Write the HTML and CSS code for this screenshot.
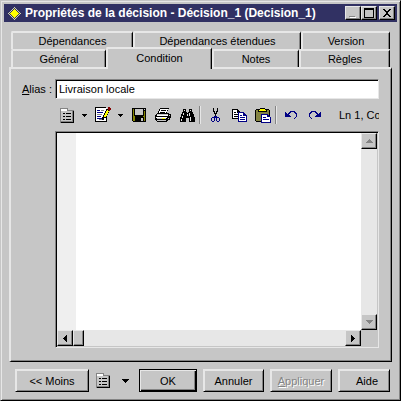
FILE: index.html
```html
<!DOCTYPE html>
<html lang="fr">
<head>
  <meta charset="UTF-8">
  <title>Propriétés de la décision</title>
  <link rel="stylesheet" href="styles.css">
</head>
<body>
  <svg width="0" height="0" class="defs" aria-hidden="true">
    <symbol id="icon-list" viewBox="0 0 14 15">
      <path d="M0 0h8v2h6v13H0z" fill="#848484"/>
      <path d="M1 1h6v2H1z" fill="#fff"/>
      <path d="M1 3h11v10H1z" fill="#c6c6c6"/>
      <path d="M13 3h1v12H1v-1h12z"/>
      <path d="M3 5h2v1H3zM3 8h2v1H3zM3 11h2v1H3zM6 5h5v1H6zM6 8h5v1H6zM6 11h5v1H6z"/>
    </symbol>
    <symbol id="icon-down" viewBox="0 0 7 4">
      <path d="M0 0h7v1H0zM1 1h5v1H1zM2 2h3v1H2zM3 3h1v1H3z"/>
    </symbol>
  </svg>

  <div class="window">
    <div class="titlebar">
      <svg class="logo" width="13" height="13" viewBox="0 0 13 13">
        <path d="M6 0h1v1h1v1h1v1h1v1h1v1h1v1h1v1h-1v1h-1v1h-1v1H9v1H8v1H7v1H6v-1H5v-1H4v-1H3V9H2V8H1V7H0V6h1V5h1V4h1V3h1V2h1V1h1z" fill="#d6d6b0"/>
        <path d="M6 1h1v1h1v1h1v1h1v1h1v1h1v1h-1v1h-1v1H9v1H8v1H7v1H6v-1H5v-1H4V9H3V8H2V7H1V6h1V5h1V4h1V3h1V2h1z" fill="#313163"/>
        <path d="M6 2h1v1h1v1h1v1h1v1h1v1h-1v1H9v1H8v1H7v1H6v-1H5V9H4V8H3V7H2V6h1V5h1V4h1V3h1z" fill="#ff0"/>
      </svg>
      <span class="title">Propriétés de la décision - Décision_1 (Decision_1)</span>
      <div class="controls">
        <button class="ctl" aria-label="Réduire">
          <svg width="10" height="10"><path d="M1 8h6v1H1z" fill="#848484"/><path d="M2 9h6v1H2z" fill="#fff"/></svg>
        </button>
        <button class="ctl" aria-label="Agrandir">
          <svg width="10" height="10"><path d="M0 0h10v10H0zM1 2v7h8V2z" fill-rule="evenodd"/></svg>
        </button>
        <button class="ctl close" aria-label="Fermer">
          <svg width="10" height="10"><path d="M1 1h2v1h1v1h2V2h1V1h2v1H8v1H7v1H6v2h1v1h1v1h1v1H7V8H6V7H4v1H3v1H1V8h1V7h1V6h1V4H3V3H2V2H1z"/></svg>
        </button>
      </div>
    </div>

    <div class="tabs">
      <div class="tab-row back">
        <button class="tab dependances">Dépendances</button>
        <button class="tab etendues">Dépendances étendues</button>
        <button class="tab version">Version</button>
      </div>
      <div class="tab-row front">
        <button class="tab general">Général</button>
        <button class="tab condition active">Condition</button>
        <button class="tab notes">Notes</button>
        <button class="tab regles">Règles</button>
      </div>
    </div>

    <div class="page">
      <div class="alias-row">
        <label for="alias"><u>A</u>lias :</label>
        <input type="text" id="alias" value="Livraison locale">
      </div>

      <div class="content">
        <div class="toolbar">
          <button class="tool" aria-label="Menu"><svg width="14" height="15"><use href="#icon-list"/></svg></button>
          <button class="tool drop" aria-label="Options du menu"><svg width="5" height="3"><path d="M0 0h5v1H0zM1 1h3v1H1zM2 2h1v1H2z"/></svg></button>
          <button class="tool" aria-label="Modifier avec">
            <svg width="16" height="16">
              <path d="M0 1h12v14H0z" fill="#fff"/>
              <path d="M0 .5h11M.5 0v15M0 14.5h12M11.5 9v6" stroke="#000"/>
              <path d="M2 3.5h3M2 5.5h6M2 9.5h4M2 11.5h7" stroke="#000084"/>
              <path d="M6 3.5h3M2 7.5h5M4 12.5h5" stroke="#848484"/>
              <path d="M12 2h3v2h-1v2h-1v2h-1v2h-1v1H9v2H7v-3h1V8h1V6h1V4h1V2z" fill="#000"/>
              <path d="M12 3h1v1h1v1h-1v2h-1v2h-1v1H9V8h1V6h1V4h1z" fill="#ff0"/>
              <path d="M13 0h2v1h1v2h-1v1h-1V3h-1z" fill="#840000"/>
            </svg>
          </button>
          <button class="tool drop" aria-label="Choisir un éditeur"><svg width="5" height="3"><path d="M0 0h5v1H0zM1 1h3v1H1zM2 2h1v1H2z"/></svg></button>
          <button class="tool" aria-label="Enregistrer">
            <svg width="14" height="14">
              <path d="M0 0h14v14H1v-1H0z"/>
              <path d="M1 1h1v7h1v1h8V8h1V3h1v10H1z" fill="#848400"/>
              <path d="M3 1h8v6H3zM12 1h1v1h-1z" fill="#c6c6c6"/>
              <path d="M3 9h9v4H3z"/>
              <path d="M9 10h2v3H9z" fill="#c6c6c6"/>
            </svg>
          </button>
          <button class="tool" aria-label="Imprimer">
            <svg width="16" height="14">
              <path d="M5 0h9v1h-1v2h-1v2h2v1h2v4h-1v2h-2v1h-1v1H2v-1H1v-1H0V7h1V6h1V5h1V3h1V1h1z"/>
              <path d="M5 1h8v1h-1v2h-1v1H4V3h1z" fill="#fff"/>
              <path d="M6 2.5h5M5 4.5h5" stroke="#000"/>
              <path d="M2 7.5h11M1 9.5h11" stroke="#fff"/>
              <path d="M2 6.5h11M2 12.5h9M14.5 7v1M13.5 10v1" stroke="#c6c6c6"/>
              <path d="M2 10.5h9" stroke="#c6c6c6"/>
              <path d="M7 10h3v1H7z" fill="#ff0"/>
            </svg>
          </button>
          <button class="tool" aria-label="Rechercher">
            <svg width="15" height="13">
              <path d="M3 0h3v3h1v1h1V3h1V0h3v3h1v2h1v3h1v5H9V9H6v4H0V8h1V5h1V3h1z"/>
              <path d="M4 1h1v1H4zM10 1h1v1h-1zM3 4h1v2H3zM2 7h1v2H2zM1 10h1v2H1zM9 4h1v3H9zM7 5h1v2H7zM10 8h1v4h-1z" fill="#e7e7e7"/>
            </svg>
          </button>
          <span class="sep"></span>
          <button class="tool" aria-label="Couper">
            <svg width="9" height="14">
              <path d="M2 0h1v3h1v2h1V3h1V0h1v4H6v2H5v3H4V6H3V4H2z"/>
              <path d="M3 8h3v1h2v1h1v3H8v1H6v-1H5v-3H4v3H3v1H1v-1H0v-3h1V9h2z" fill="#000084"/>
              <path d="M1 10h2v3H1zM6 10h2v3H6z" fill="#c6c6c6"/>
            </svg>
          </button>
          <button class="tool" aria-label="Copier">
            <svg width="15" height="13">
              <path d="M0 0h6v1h1v1h1v1h1v7H0z"/>
              <path d="M1 1h4v3h3v5H1z" fill="#fff"/>
              <path d="M2 3h2v1H2zM2 5h4v1H2zM2 7h4v1H2z"/>
              <path d="M6 3h6v1h1v1h1v1h1v7H6z" fill="#000084"/>
              <path d="M7 4h4v3h3v5H7z" fill="#fff"/>
              <path d="M8 6h2v1H8zM8 8h5v1H8zM8 10h5v1H8z" fill="#000084"/>
            </svg>
          </button>
          <button class="tool" aria-label="Coller">
            <svg width="16" height="15">
              <path d="M1 1h4V0h5v1h4v1h1v12H1v-1H0V2h1z"/>
              <path d="M1 2h13v11H1z" fill="#848442"/>
              <path d="M3 2h9v2H3z" fill="#000"/>
              <path d="M5 1h5v1h1v1H4V2h1z" fill="#ff0"/>
              <path d="M6 6h7v1h1v1h1v1h1v6H6z" fill="#000084"/>
              <path d="M7 7h5v2h3v5H7z" fill="#fff"/>
              <path d="M8 9h3v1H8zM8 11h6v1H8z" fill="#000084"/>
            </svg>
          </button>
          <span class="sep"></span>
          <button class="tool" aria-label="Annuler la saisie">
            <svg width="12" height="8" class="undo">
              <path d="M0 1h1v1h1v1h1V2h1V1h1V0h5v1h1v1h1v4h-1v1h-1v1H9V7h1V6h1V3h-1V2H9V1H6v1H5v1H4v1h1v1h1v1H0z"/>
            </svg>
          </button>
          <button class="tool" aria-label="Rétablir la saisie">
            <svg width="12" height="8" class="undo">
              <path d="M12 1h-1v1h-1v1H9V2H8V1H7V0H2v1H1v1H0v4h1v1h1v1h1V7H2V6H1V3h1V2h1V1h3v1h1v1h1v1H7v1H6v1h6z"/>
            </svg>
          </button>
          <span class="position">Ln 1, Col 1</span>
        </div>

        <div class="editor">
          <textarea class="code" aria-label="Condition"></textarea>
          <div class="scroll vertical">
            <button class="arrow" aria-label="Haut" disabled><svg width="7" height="4"><path d="M3 0h1v1h1v1h1v1h1v1H0V3h1V2h1V1h1z"/></svg></button>
            <button class="arrow" aria-label="Bas" disabled><svg width="7" height="4"><use href="#icon-down"/></svg></button>
          </div>
          <div class="scroll horizontal">
            <button class="arrow" aria-label="Gauche"><svg width="4" height="7"><path d="M3 0h1v7H3V6H2V5H1V4H0V3h1V2h1V1h1z"/></svg></button>
            <span class="thumb"></span>
            <button class="arrow last" aria-label="Droite"><svg width="4" height="7"><path d="M0 0h1v1h1v1h1v1h1v1H3v1H2v1H1v1H0z"/></svg></button>
          </div>
          <div class="corner"></div>
        </div>
      </div>
    </div>

    <div class="footer">
      <button class="btn moins">&lt;&lt; Moins</button>
      <button class="tool" aria-label="Menu de l'objet"><svg width="14" height="15"><use href="#icon-list"/></svg></button>
      <button class="tool more" aria-label="Options"><svg width="7" height="4"><use href="#icon-down"/></svg></button>
      <button class="btn ok">OK</button>
      <button class="btn annuler">Annuler</button>
      <button class="btn appliquer" disabled><u>A</u>ppliquer</button>
      <button class="btn aide">Aide</button>
    </div>
  </div>
</body>
</html>
```
FILE: styles.css
```css
* {
  box-sizing: border-box;
}
body {
  margin: 0;
  background: #c6c6c6;
  font-family: "Liberation Sans", Arial, sans-serif;
  font-size: 11px;
  line-height: 14px;
  color: #000;
}
button, input, textarea {
  font: inherit;
  color: inherit;
  margin: 0;
  padding: 0;
  border: 0;
  border-radius: 0;
  outline: none;
}
button {
  background: #c6c6c6;
  white-space: nowrap;
}
svg {
  display: block;
  shape-rendering: crispEdges;
}
.defs {
  position: absolute;
}
.window {
  display: flex;
  flex-direction: column;
  min-height: 100vh;
  padding: 3px;
  border: 1px solid;
  border-color: #c6c6c6 #000 #000 #c6c6c6;
  box-shadow: inset 1px 1px #e7e7e7, inset -1px -1px #848484;
}

/* title bar */
.titlebar {
  display: flex;
  align-items: center;
  height: 18px;
  padding: 0 2px 0 4px;
  background: #313163;
  color: #fff;
}
.title {
  flex: 1;
  margin-left: 4px;
  font-size: 12px;
  font-weight: bold;
  white-space: nowrap;
}
.controls {
  display: flex;
}
.ctl {
  display: flex;
  justify-content: center;
  align-items: center;
  width: 16px;
  height: 14px;
  border: 1px solid;
  border-color: #e7e7e7 #000 #000 #e7e7e7;
  box-shadow: inset -1px -1px #848484;
}
.close {
  margin-left: 2px;
}

/* tabs */
.tabs {
  margin: 9px 7px 0;
}
.tab-row {
  display: flex;
  height: 18px;
}
.tab {
  border: 2px solid;
  border-color: #e7e7e7 #000 #e7e7e7 #e7e7e7;
  border-width: 2px 1px 0 2px;
  border-radius: 2px 2px 0 0;
  box-shadow: inset -1px 0 #848484;
}
.dependances {
  flex: 122 1 122px;
}
.etendues {
  flex: 168 1 168px;
}
.version {
  flex: 89 1 89px;
}
.general {
  flex: 95 1 95px;
}
.condition {
  flex: 106 1 106px;
}
.notes {
  flex: 87 1 87px;
}
.regles {
  flex: 91 1 91px;
}
.tab.active {
  position: relative;
  height: 22px;
  margin-top: -2px;
  padding-bottom: 2px;
}

/* tab page */
.page {
  flex: 1;
  display: flex;
  flex-direction: column;
  margin: 0 5px;
  padding: 10px 12px 13px 11px;
  border: 2px solid;
  border-color: #e7e7e7 #000 #000 #e7e7e7;
  border-width: 2px 1px 1px 2px;
  box-shadow: inset -1px -1px #848484;
}
.alias-row {
  display: flex;
  align-items: center;
}
.alias-row label {
  width: 33px;
  white-space: nowrap;
}
#alias {
  flex: 1;
  min-width: 0;
  height: 20px;
  padding: 0 3px;
  background: #fff;
  border: 1px solid;
  border-color: #848484 #e7e7e7 #e7e7e7 #848484;
  box-shadow: inset 1px 1px #000;
}
.content {
  flex: 1;
  display: flex;
  flex-direction: column;
  margin-left: 33px;
}
.toolbar {
  display: flex;
  align-items: center;
  height: 32px;
  overflow: hidden;
}
.tool {
  flex: none;
  display: flex;
  justify-content: center;
  align-items: center;
  width: 24px;
  height: 22px;
}
.drop {
  width: 10px;
  margin-right: 2px;
}
.sep {
  flex: none;
  width: 2px;
  height: 18px;
  margin-right: 2px;
  border-left: 1px solid #848484;
  border-right: 1px solid #e7e7e7;
}
.undo {
  fill: #000084;
}
.position {
  margin-left: 12px;
  white-space: nowrap;
}
.editor {
  flex: 1;
  display: grid;
  grid-template-columns: 1fr 16px;
  grid-template-rows: 1fr 16px;
  border: 1px solid;
  border-color: #848484 #e7e7e7 #e7e7e7 #848484;
  box-shadow: inset 1px 1px #000;
  padding: 1px;
}
.code {
  width: 100%;
  height: 100%;
  padding-left: 22px;
  resize: none;
  background: linear-gradient(to right, #efefef 19px, #fff 19px);
}
.scroll {
  display: flex;
  background: #e7e7e7;
}
.vertical {
  flex-direction: column;
  justify-content: space-between;
}
.arrow, .thumb {
  display: flex;
  justify-content: center;
  align-items: center;
  width: 16px;
  height: 16px;
  background: #c6c6c6;
  border: 1px solid;
  border-color: #e7e7e7 #000 #000 #e7e7e7;
  box-shadow: inset -1px -1px #848484;
}
.arrow:disabled svg {
  fill: #848484;
}
.thumb {
  width: 11px;
}
.last {
  margin-left: auto;
}

/* bottom buttons */
.footer {
  display: flex;
  align-items: center;
  margin: 7px 7px 5px 11px;
}
.footer .tool {
  margin-left: 2px;
}
.footer .more {
  width: 20px;
  margin: 0 4px 0 0;
}
.btn {
  height: 23px;
  border: 1px solid;
  border-color: #e7e7e7 #000 #000 #e7e7e7;
  box-shadow: inset 1px 1px #e7e7e7, inset -1px -1px #848484;
}
.moins {
  flex: 74 1 74px;
}
.ok {
  flex: 58 1 58px;
  margin-right: 6px;
  border-color: #000;
  box-shadow: inset 1px 1px #e7e7e7, inset -1px -1px #000, inset -2px -2px #848484;
}
.annuler {
  flex: 61 1 61px;
}
.appliquer {
  flex: 62 1 62px;
  margin: 0 6px;
  color: #848484;
  text-shadow: 1px 1px #fff;
}
.aide {
  flex: 52 1 52px;
  padding-left: 6px;
}
```
